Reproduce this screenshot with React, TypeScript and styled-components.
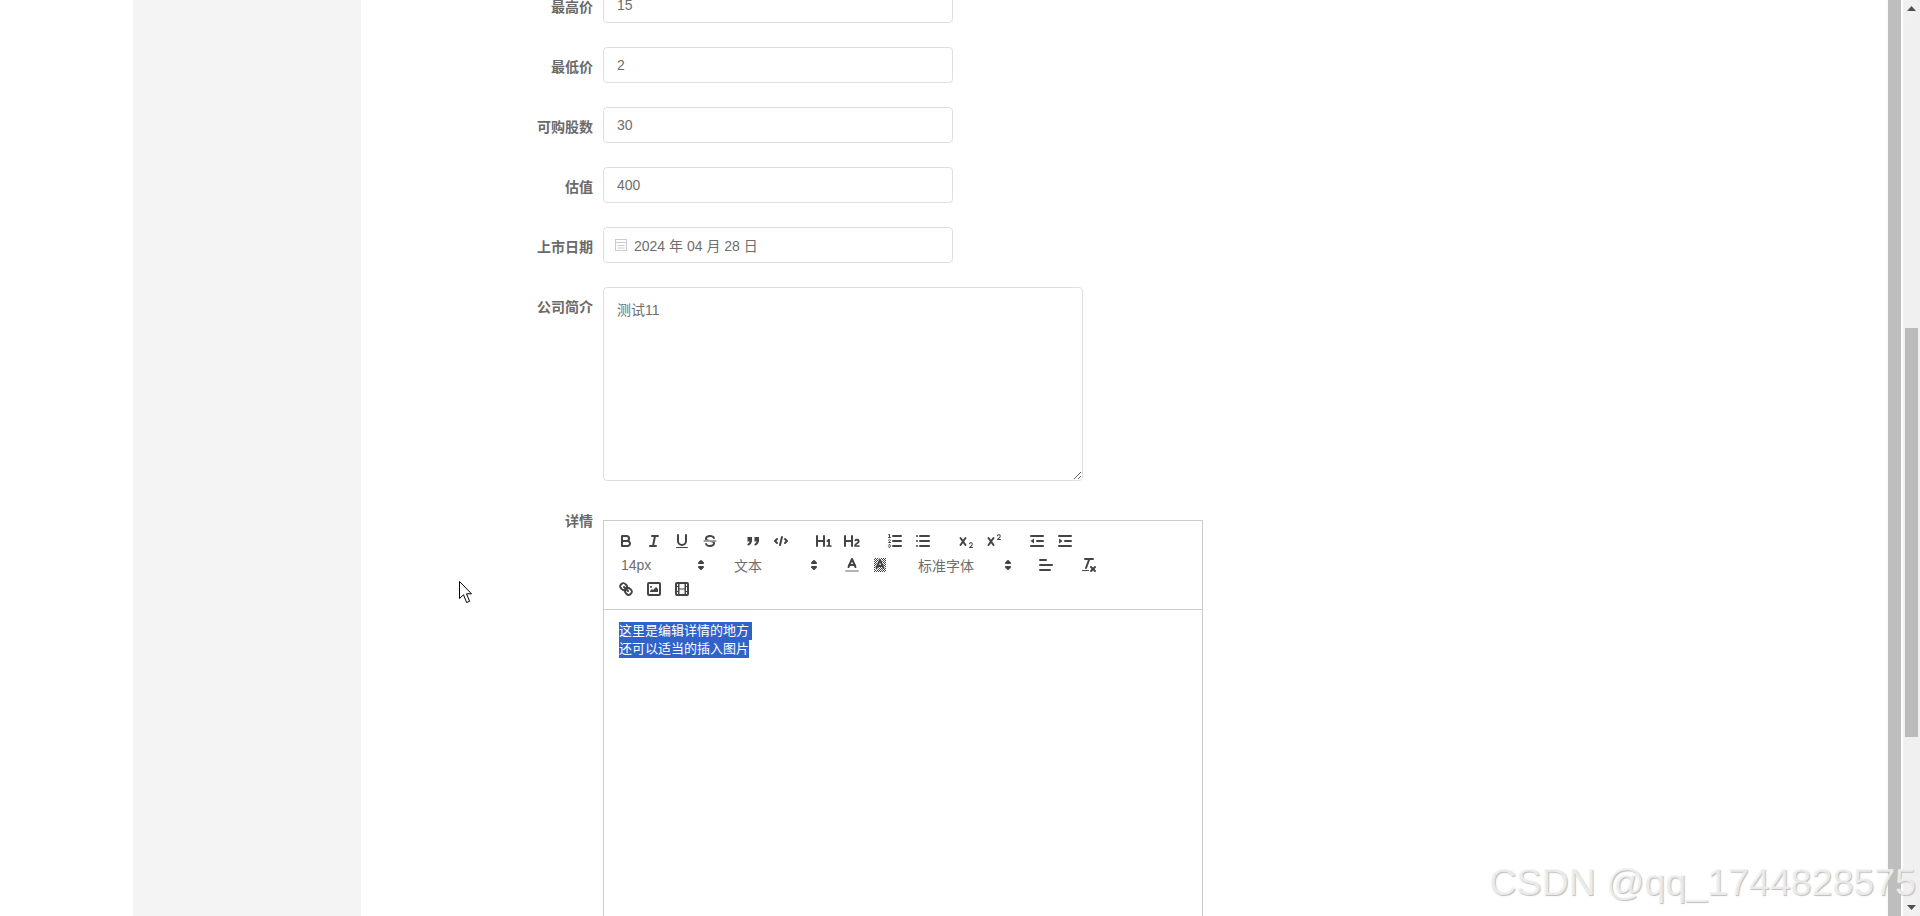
import React from "react";
import styled, { createGlobalStyle } from "styled-components";

const GlobalStyle = createGlobalStyle`
  html, body {
    margin: 0;
    padding: 0;
    height: 100%;
    overflow: hidden;
    background: #fff;
  }
  body {
    font-family: "Liberation Sans", "Noto Sans CJK SC", sans-serif;
    font-size: 14px;
    color: #6a6a6a;
  }
`;

const Shell = styled.div`
  position: relative;
  display: flex;
  height: 916px;
  overflow: hidden;
  background: #fff;
`;

const Gutter = styled.div`
  width: 133px;
  flex-shrink: 0;
`;

const Sidebar = styled.aside`
  width: 228px;
  flex-shrink: 0;
  background: #f4f4f4;
`;

const Main = styled.main`
  flex: 1;
  min-width: 0;
  padding-left: 132px;
`;

const Form = styled.form`
  display: flex;
  flex-direction: column;
  margin-top: -13px;
`;

const Row = styled.div<{ $gap?: number }>`
  display: flex;
  gap: 10px;
  margin-bottom: ${(p) => p.$gap ?? 24}px;
`;

const Label = styled.label<{ $top?: number }>`
  width: 100px;
  height: 36px;
  flex-shrink: 0;
  margin-top: ${(p) => p.$top ?? 0}px;
  text-align: right;
  line-height: 40px;
  font-size: 14px;
  font-weight: 700;
  color: #6a6a6a;
`;

const TextInput = styled.input`
  box-sizing: border-box;
  width: 350px;
  height: 36px;
  padding: 0 13px;
  border: 1px solid #dcdfe6;
  border-radius: 4px;
  outline: none;
  font: 14px "Liberation Sans", "Noto Sans CJK SC", sans-serif;
  color: #6e6e6e;
`;

const DateField = styled.div`
  box-sizing: border-box;
  display: flex;
  align-items: center;
  gap: 6px;
  width: 350px;
  height: 36px;
  padding: 0 10px 1px;
  border: 1px solid #dcdfe6;
  border-radius: 4px;
  color: #6e6e6e;
`;

const Summary = styled.textarea`
  box-sizing: border-box;
  display: block;
  width: 480px;
  height: 194px;
  padding: 4px 13px;
  margin: 0;
  border: 1px solid #dcdfe6;
  border-radius: 4px;
  outline: none;
  resize: vertical;
  font: 14px/36px "Liberation Sans", "Noto Sans CJK SC", sans-serif;
  color: #6e6e6e;
`;

const Editor = styled.div`
  box-sizing: border-box;
  width: 600px;
  height: 700px;
  border: 1px solid #ccc;
`;

const Toolbar = styled.div`
  display: flex;
  flex-direction: column;
  padding: 8px;
  border-bottom: 1px solid #ccc;
`;

const ToolRow = styled.div`
  display: flex;
  height: 24px;
`;

const Group = styled.span`
  display: flex;
  margin-right: 15px;
`;

const Tool = styled.span`
  box-sizing: border-box;
  display: flex;
  width: 28px;
  height: 24px;
  padding: 3px 5px;

  svg {
    width: 18px;
    height: 18px;
    fill: none;
    stroke: #444;
    stroke-width: 2;
    stroke-linecap: round;
    stroke-linejoin: round;
  }

  svg .fill {
    fill: #444;
    stroke: none;
  }

  svg .thin {
    stroke-width: 1;
  }
`;

const Picker = styled.span<{ $wide?: boolean }>`
  box-sizing: border-box;
  display: flex;
  align-items: center;
  justify-content: space-between;
  width: ${(p) => (p.$wide ? 108 : 98)}px;
  height: 24px;
  margin-right: 15px;
  padding-left: 9px;
  font-size: 14px;
  color: #6e6e6e;

  svg {
    width: 18px;
    height: 18px;
    fill: #444;
    stroke: #444;
    stroke-width: 2;
    stroke-linejoin: round;
  }
`;

const Body = styled.div`
  padding: 12px 15px;
  font-size: 13px;
  line-height: 18px;
`;

const Selected = styled.span<{ $tail?: number }>`
  display: table;
  padding-right: ${(p) => p.$tail ?? 0}px;
  background: #3062ca;
  color: #fff;
`;

const InnerBar = styled.div`
  box-sizing: border-box;
  width: 15px;
  flex-shrink: 0;
  border-left: 2px solid #fafafa;
  background: #bebebe;
`;

const OuterBar = styled.div`
  display: flex;
  flex-direction: column;
  align-items: center;
  width: 17px;
  margin-left: 2px;
  flex-shrink: 0;
  background: #f0f0f0;
`;

const Arrow = styled.div`
  display: flex;
  align-items: center;
  justify-content: center;
  height: 17px;
  flex-shrink: 0;
  background: #f1f1f1;
`;

const Thumb = styled.div`
  width: 13px;
  height: 409px;
  margin-top: 311px;
  background: #bbb;
`;

const Spacer = styled.div`
  flex: 1;
`;

const Watermark = styled.div`
  position: absolute;
  right: 4px;
  bottom: 12px;
  font: 37.6px/44px "Liberation Sans", sans-serif;
  color: rgba(242, 242, 242, 0.85);
  text-shadow: 1px 1px 1px #bdbdbd;
  white-space: nowrap;
`;

const Cursor = styled.svg`
  position: absolute;
  left: 459px;
  top: 581px;
  width: 13px;
  height: 23px;
`;

const Caret = () => (
  <svg viewBox="0 0 18 18">
    <polygon points="7 11 9 13 11 11 7 11" />
    <polygon points="7 7 9 5 11 7 7 7" />
  </svg>
);

const Cross = () => (
  <>
    <line x1="3.5" y1="6" x2="8.5" y2="13" />
    <line x1="8.5" y1="6" x2="3.5" y2="13" />
  </>
);

const icons: Record<string, React.ReactNode> = {
  bold: (
    <>
      <path d="M5,4H9.5A2.5,2.5,0,0,1,12,6.5v0A2.5,2.5,0,0,1,9.5,9H5V4Z" />
      <path d="M5,9h5.5A2.5,2.5,0,0,1,13,11.5v0A2.5,2.5,0,0,1,10.5,14H5V9Z" />
    </>
  ),
  italic: (
    <>
      <line x1="7" x2="13" y1="4" y2="4" />
      <line x1="5" x2="11" y1="14" y2="14" />
      <line x1="8" x2="10" y1="14" y2="4" />
    </>
  ),
  underline: (
    <>
      <path d="M5,3V9a4,4,0,0,0,4,4H9a4,4,0,0,0,4-4V3" />
      <rect className="fill" x="3" y="15" width="12" height="1" rx="0.5" />
    </>
  ),
  strike: (
    <>
      <line className="thin" x1="3" x2="15" y1="9" y2="9" />
      <path className="fill" d="M9.007,8C6.542,7.791,6,7.519,6,6.5,6,5.792,7.283,5,9,5c1.571,0,2.765.679,2.969,1.309a1,1,0,0,0,1.9-.617C13.356,4.106,11.354,3,9,3,6.2,3,4,4.538,4,6.5a3.2,3.2,0,0,0,.5,1.843Z" />
      <path className="fill" d="M8.984,10C11.457,10.208,12,10.479,12,11.5c0,.708-1.283,1.5-3,1.5-1.571,0-2.765-.679-2.969-1.309a1,1,0,1,0-1.9.617C4.644,13.894,6.646,15,9,15c2.8,0,5-1.538,5-3.5a3.2,3.2,0,0,0-.5-1.843Z" />
    </>
  ),
  quote: (
    <>
      <rect className="fill" x="3.5" y="5" width="4.5" height="4.5" />
      <rect className="fill" x="10.5" y="5" width="4.5" height="4.5" />
      <path d="M7,8c0,2.4-1,3.6-2.6,4.5" />
      <path d="M14,8c0,2.4-1,3.6-2.6,4.5" />
    </>
  ),
  code: (
    <>
      <polyline points="5 7 3 9 5 11" />
      <polyline points="13 7 15 9 13 11" />
      <line x1="10" x2="8" y1="5" y2="13" />
    </>
  ),
  h1: (
    <path className="fill" d="M10,4V14a1,1,0,0,1-2,0V10H3v4a1,1,0,0,1-2,0V4A1,1,0,0,1,3,4V8H8V4a1,1,0,0,1,2,0Zm6.06787,9.209H14.98975V7.59863a.54085.54085,0,0,0-.605-.60547h-.62744a1.01119,1.01119,0,0,0-.748.29688L11.645,8.56641a.5435.5435,0,0,0-.022.8584l.28613.30762a.53861.53861,0,0,0,.84717.0332l.09912-.08789a1.2137,1.2137,0,0,0,.2417-.35254h.02246s-.01123.30859-.01123.60547V13.209H12.041a.54085.54085,0,0,0-.605.60547v.43945a.54085.54085,0,0,0,.605.60547h4.02686a.54085.54085,0,0,0,.605-.60547v-.43945A.54085.54085,0,0,0,16.06787,13.209Z" />
  ),
  h2: (
    <path className="fill" d="M16.73975,13.81445v.43945a.54085.54085,0,0,1-.605.60547H11.855a.58392.58392,0,0,1-.64893-.60547V14.0127c0-2.90527,3.39941-3.42187,3.39941-4.55469a.77675.77675,0,0,0-.84717-.78125,1.17684,1.17684,0,0,0-.83594.38477c-.2749.26367-.561.374-.85791.13184l-.4292-.34082c-.30811-.24219-.38525-.51758-.1543-.81445a2.97155,2.97155,0,0,1,2.45361-1.17676,2.45393,2.45393,0,0,1,2.68408,2.40918c0,2.45312-3.1792,2.92676-3.27832,3.93848h2.79443A.54085.54085,0,0,1,16.73975,13.81445ZM9,3A.99974.99974,0,0,0,8,4V8H3V4A1,1,0,0,0,1,4V14a1,1,0,0,0,2,0V10H8v4a1,1,0,0,0,2,0V4A.99974.99974,0,0,0,9,3Z" />
  ),
  ordered: (
    <>
      <line x1="7" x2="15" y1="4" y2="4" />
      <line x1="7" x2="15" y1="9" y2="9" />
      <line x1="7" x2="15" y1="14" y2="14" />
      <line className="thin" x1="2.5" x2="4.5" y1="5.5" y2="5.5" />
      <path className="fill" d="M3.5,6A0.5,0.5,0,0,1,3,5.5V3.085l-0.276.138A0.5,0.5,0,0,1,2.053,3c-0.124-.247-0.023-0.324.224-0.447l1-.5A0.5,0.5,0,0,1,4,2.5v3A0.5,0.5,0,0,1,3.5,6Z" />
      <path className="thin" d="M4.5,10.5h-2c0-.234,1.85-1.076,1.85-2.234A0.959,0.959,0,0,0,2.5,8.156" />
      <path className="thin" d="M2.5,14.846a0.959,0.959,0,0,0,1.85-.109A0.7,0.7,0,0,0,3.75,14a0.688,0.688,0,0,0,.6-0.736,0.959,0.959,0,0,0-1.85-.109" />
    </>
  ),
  bullet: (
    <>
      <line x1="6" x2="15" y1="4" y2="4" />
      <line x1="6" x2="15" y1="9" y2="9" />
      <line x1="6" x2="15" y1="14" y2="14" />
      <line x1="3" x2="3" y1="4" y2="4" />
      <line x1="3" x2="3" y1="9" y2="9" />
      <line x1="3" x2="3" y1="14" y2="14" />
    </>
  ),
  sub: (
    <>
      <Cross />
      <path className="fill" d="M15.5,15H13.861a3.858,3.858,0,0,0,1.914-2.975,1.8,1.8,0,0,0-1.6-1.751A1.921,1.921,0,0,0,12.021,11.7a0.50013,0.50013,0,1,0,.957.291h0a0.914,0.914,0,0,1,1.053-.725,0.81,0.81,0,0,1,.744.762c0,1.076-1.16971,1.86982-1.93971,2.43082A1.45639,1.45639,0,0,0,12,15.5a0.5,0.5,0,0,0,.5.5h3A0.5,0.5,0,0,0,15.5,15Z" />
    </>
  ),
  sup: (
    <>
      <Cross />
      <path className="fill" d="M15.5,7H13.861a4.015,4.015,0,0,0,1.914-2.975,1.8,1.8,0,0,0-1.6-1.751A1.922,1.922,0,0,0,12.021,3.7a0.5,0.5,0,1,0,.957.291,0.917,0.917,0,0,1,1.053-.725,0.81,0.81,0,0,1,.744.762c0,1.077-1.164,1.925-1.934,2.486A1.423,1.423,0,0,0,12,7.5a0.5,0.5,0,0,0,.5.5h3A0.5,0.5,0,0,0,15.5,7Z" />
    </>
  ),
  outdent: (
    <>
      <line x1="3" x2="15" y1="14" y2="14" />
      <line x1="3" x2="15" y1="4" y2="4" />
      <line x1="9" x2="15" y1="9" y2="9" />
      <polygon className="fill" points="6 6.5 6 11.5 2.5 9" />
    </>
  ),
  indent: (
    <>
      <line x1="3" x2="15" y1="14" y2="14" />
      <line x1="3" x2="15" y1="4" y2="4" />
      <line x1="9" x2="15" y1="9" y2="9" />
      <polygon className="fill" points="3 6.5 3 11.5 6.5 9" />
    </>
  ),
  color: (
    <>
      <line x1="3" x2="15" y1="15" y2="15" opacity="0.4" />
      <polyline points="5.5 11 9 3 12.5 11" />
      <line x1="11.63" x2="6.38" y1="9" y2="9" />
    </>
  ),
  background: (
    <>
      <defs>
        <pattern id="hatch" width="2" height="2" patternUnits="userSpaceOnUse">
          <rect className="fill" width="1" height="1" />
          <rect className="fill" x="1" y="1" width="1" height="1" />
        </pattern>
      </defs>
      <rect x="3" y="2" width="12" height="14" fill="url(#hatch)" stroke="none" />
      <polyline points="5.5 12 9 4 12.5 12" stroke="#fff" strokeWidth="3" />
      <polyline points="5.5 12 9 4 12.5 12" />
      <line x1="11.63" x2="6.38" y1="10" y2="10" />
    </>
  ),
  align: (
    <>
      <line x1="3" x2="15" y1="9" y2="9" />
      <line x1="3" x2="13" y1="14" y2="14" />
      <line x1="3" x2="9" y1="4" y2="4" />
    </>
  ),
  clean: (
    <>
      <line x1="5" x2="13" y1="3" y2="3" />
      <line x1="6" x2="9.35" y1="12" y2="3" />
      <line x1="11" x2="15" y1="11" y2="15" />
      <line x1="15" x2="11" y1="11" y2="15" />
      <rect className="fill" x="2" y="14" width="7" height="1" rx="0.5" />
    </>
  ),
  link: (
    <>
      <line x1="7" x2="11" y1="7" y2="11" />
      <path d="M8.9,4.577a3.476,3.476,0,0,1,.36,4.679A3.476,3.476,0,0,1,4.577,8.9C3.185,7.5,2.035,6.4,4.217,4.217S7.5,3.185,8.9,4.577Z" />
      <path d="M13.423,9.1a3.476,3.476,0,0,0-4.679-.36,3.476,3.476,0,0,0,.36,4.679c1.392,1.392,2.5,2.542,4.679.36S14.815,10.5,13.423,9.1Z" />
    </>
  ),
  image: (
    <>
      <rect x="3" y="3" width="12" height="12" rx="1" />
      <circle className="fill" cx="6" cy="7" r="1" />
      <polyline className="fill" points="5 12 5 11 7 9 8 10 11 7 13 9 13 12 5 12" />
    </>
  ),
  video: (
    <>
      <rect x="3" y="3" width="12" height="12" rx="1" />
      <line className="thin" x1="6" x2="12" y1="9" y2="9" />
      <rect className="fill" x="5" y="4" width="1.5" height="10" />
      <rect className="fill" x="11.5" y="4" width="1.5" height="10" />
      <rect className="fill" x="3" y="6" width="2" height="1" />
      <rect className="fill" x="3" y="11" width="2" height="1" />
      <rect className="fill" x="13" y="6" width="2" height="1" />
      <rect className="fill" x="13" y="11" width="2" height="1" />
    </>
  ),
};

const ToolGroup = ({ names }: { names: string[] }) => (
  <Group>
    {names.map((name) => (
      <Tool key={name}>
        <svg viewBox="0 0 18 18">{icons[name]}</svg>
      </Tool>
    ))}
  </Group>
);

const fields = [
  { label: "最高价", value: "15" },
  { label: "最低价", value: "2" },
  { label: "可购股数", value: "30" },
  { label: "估值", value: "400" },
];

const App: React.FC = () => {
  return (
    <>
      <GlobalStyle />
      <Shell>
        <Gutter />
        <Sidebar />
        <Main>
          <Form>
            {fields.map((f) => (
              <Row key={f.label}>
                <Label>{f.label}</Label>
                <TextInput readOnly value={f.value} />
              </Row>
            ))}
            <Row>
              <Label>上市日期</Label>
              <DateField>
                <svg width="14" height="14" viewBox="0 0 14 14" fill="none" stroke="#c9ccd2">
                  <rect x="1.5" y="1.5" width="11" height="11" />
                  <line x1="1.5" x2="12.5" y1="4.5" y2="4.5" />
                  <line x1="3.5" x2="10.5" y1="7.5" y2="7.5" />
                  <line x1="3.5" x2="10.5" y1="10" y2="10" />
                </svg>
                2024 年 04 月 28 日
              </DateField>
            </Row>
            <Row $gap={39}>
              <Label>公司简介</Label>
              <Summary readOnly value="测试11" />
            </Row>
            <Row $gap={0}>
              <Label $top={-19}>详情</Label>
              <Editor>
                <Toolbar>
                  <ToolRow>
                    <ToolGroup names={["bold", "italic", "underline", "strike"]} />
                    <ToolGroup names={["quote", "code"]} />
                    <ToolGroup names={["h1", "h2"]} />
                    <ToolGroup names={["ordered", "bullet"]} />
                    <ToolGroup names={["sub", "sup"]} />
                    <ToolGroup names={["outdent", "indent"]} />
                  </ToolRow>
                  <ToolRow>
                    <Picker>
                      14px
                      <Caret />
                    </Picker>
                    <Picker>
                      文本
                      <Caret />
                    </Picker>
                    <ToolGroup names={["color", "background"]} />
                    <Picker $wide>
                      标准字体
                      <Caret />
                    </Picker>
                    <ToolGroup names={["align"]} />
                    <ToolGroup names={["clean"]} />
                  </ToolRow>
                  <ToolRow>
                    <ToolGroup names={["link", "image", "video"]} />
                  </ToolRow>
                </Toolbar>
                <Body>
                  <Selected $tail={3}>这里是编辑详情的地方</Selected>
                  <Selected>还可以适当的插入图片</Selected>
                </Body>
              </Editor>
            </Row>
          </Form>
        </Main>
        <InnerBar />
        <OuterBar>
          <Arrow>
            <svg width="9" height="5" viewBox="0 0 9 5" fill="#505050">
              <polygon points="4.5 0 9 5 0 5" />
            </svg>
          </Arrow>
          <Thumb />
          <Spacer />
          <Arrow>
            <svg width="9" height="5" viewBox="0 0 9 5" fill="#505050">
              <polygon points="0 0 9 0 4.5 5" />
            </svg>
          </Arrow>
        </OuterBar>
        <Cursor viewBox="0 0 13 23">
          <path d="M0.5 0.5V17.5L4.5 13.8L7.6 21.5L10.6 20.3L7.5 12.8H12.5Z" fill="#fff" stroke="#000" strokeWidth="1" />
        </Cursor>
        <Watermark>CSDN @qq_1744828575</Watermark>
      </Shell>
    </>
  );
};

export default App;
